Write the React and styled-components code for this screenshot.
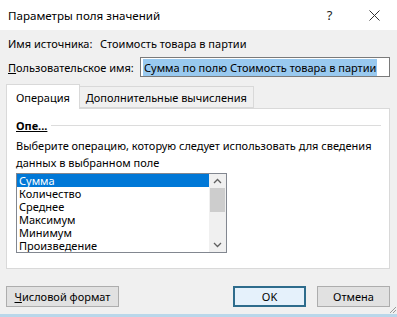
import React from 'react';
import styled, { createGlobalStyle } from 'styled-components';

const Global = createGlobalStyle`
  html, body { margin: 0; padding: 0; background: #f0f0f0; }
  body { font-family: "Noto Sans", "Open Sans", sans-serif; font-size: 11px; color: #000; }
`;

const Window = styled.div`
  width: 397px;
  height: 317px;
  box-sizing: border-box;
  background: #f0f0f0;
  border-bottom: 3px solid #b9d7ea;
  display: flex;
  flex-direction: column;
  overflow: hidden;
  position: relative;
  white-space: nowrap;
`;

const TitleBar = styled.div`
  height: 30px;
  background: #fff;
  display: flex;
  align-items: center;
  padding-left: 8px;
  font-size: 11.6px;
`;

const Title = styled.div`
  flex: 1;
`;

const TitleBtn = styled.div`
  width: 45px;
  height: 30px;
  display: flex;
  align-items: center;
  justify-content: center;
  color: #222;
  font-size: ${p => p.$size || 13}px;
`;

const Body = styled.div`
  flex: 1;
  padding: 0 7px 0 6px;
  display: flex;
  flex-direction: column;
`;

const InfoRow = styled.div`
  height: ${p => p.$h}px;
  display: flex;
  align-items: center;
  padding-left: 2px;
`;

const Label = styled.div`
  width: ${p => p.$w}px;
  flex-shrink: 0;
  u { text-decoration: underline; }
`;

const NameInput = styled.div`
  flex: 1;
  height: 20px;
  box-sizing: border-box;
  border: 1px solid #7a7a7a;
  background: #fff;
  display: flex;
  align-items: center;
  padding-left: 2px;
  overflow: hidden;
`;

const Selected = styled.span`
  background: #99c9ef;
  padding: 1px 1px;
`;

const Tabs = styled.div`
  display: flex;
  align-items: flex-end;
  height: 24px;
  margin-top: 6px;
  position: relative;
  z-index: 1;
`;

const Tab = styled.div`
  height: ${p => (p.$active ? 25 : 22)}px;
  box-sizing: border-box;
  padding: 0 ${p => p.$pad}px;
  display: flex;
  align-items: center;
  border: 1px solid #d9d9d9;
  border-bottom: ${p => (p.$active ? 'none' : '1px solid #d9d9d9')};
  border-left: ${p => (p.$first ? '1px solid #d9d9d9' : 'none')};
  background: ${p => (p.$active ? '#fff' : '#f0f0f0')};
  margin-bottom: ${p => (p.$active ? -1 : 0)}px;
`;

const Panel = styled.div`
  height: 161px;
  box-sizing: border-box;
  background: #fff;
  border: 1px solid #d9d9d9;
  padding: 8px 8px 0 9px;
`;

const GroupHead = styled.div`
  display: flex;
  align-items: center;
  gap: 4px;
  height: 16px;
`;

const GroupTitle = styled.span`
  font-weight: bold;
  text-decoration: underline;
`;

const Rule = styled.div`
  flex: 1;
  height: 1px;
  background: #dcdcdc;
  margin-top: 1px;
`;

const Hint = styled.div`
  margin-top: 4px;
  line-height: 17px;
`;

const ListBox = styled.div`
  margin-top: 2px;
  width: 211px;
  height: 80px;
  box-sizing: border-box;
  border: 1px solid #828790;
  display: flex;
  overflow: hidden;
`;

const Items = styled.div`
  flex: 1;
`;

const Item = styled.div`
  height: 13px;
  line-height: 13px;
  padding-left: 2px;
  background: ${p => (p.$sel ? '#0078d7' : 'transparent')};
  color: ${p => (p.$sel ? '#fff' : '#000')};
`;

const ScrollBar = styled.div`
  width: 17px;
  background: #f0f0f0;
  display: flex;
  flex-direction: column;
  align-items: center;
`;

const Arrow = styled.div`
  height: 14px;
  width: 17px;
  display: flex;
  align-items: center;
  justify-content: center;
`;

const Thumb = styled.div`
  width: 15px;
  height: 24px;
  background: #cdcdcd;
`;

const Spacer = styled.div`
  flex: 1;
`;

const Footer = styled.div`
  display: flex;
  align-items: center;
  margin-top: 17px;
  gap: 11px;
`;

const Button = styled.div`
  height: 21px;
  width: ${p => p.$w}px;
  box-sizing: border-box;
  display: flex;
  align-items: center;
  justify-content: center;
  background: ${p => (p.$def ? '#e5f1fb' : '#e1e1e1')};
  border: ${p => (p.$def ? '2px solid #2e6c8c' : '1px solid #adadad')};
  u { text-decoration: underline; }
`;

const Grip = styled.svg`
  position: absolute;
  right: 0;
  bottom: 0;
`;

const Chevron = ({ up }) => (
  <svg width="9" height="6" viewBox="0 0 9 6">
    <path d={up ? 'M1 5 L4.5 1.5 L8 5' : 'M1 1 L4.5 4.5 L8 1'} fill="none" stroke="#606060" strokeWidth="1.3" />
  </svg>
);

const ops = ['Сумма', 'Количество', 'Среднее', 'Максимум', 'Минимум', 'Произведение'];

export default function App() {
  return (
    <Window>
      <Global />
      <TitleBar>
        <Title>Параметры поля значений</Title>
        <TitleBtn $size={13}>?</TitleBtn>
        <TitleBtn $size={15}>
          <svg width="11" height="11" viewBox="0 0 11 11">
            <path d="M0.5 0.5 L10.5 10.5 M10.5 0.5 L0.5 10.5" stroke="#333" strokeWidth="1" />
          </svg>
        </TitleBtn>
      </TitleBar>
      <Body>
        <InfoRow $h={26}>
          <Label $w={92}>Имя источника:</Label>
          <span>Стоимость товара в партии</span>
        </InfoRow>
        <InfoRow $h={22}>
          <Label $w={132}><u>П</u>ользовательское имя:</Label>
          <NameInput>
            <Selected>Сумма по полю Стоимость товара в партии</Selected>
          </NameInput>
        </InfoRow>
        <Tabs>
          <Tab $active $first $pad={9}>Операция</Tab>
          <Tab $pad={6}>Дополнительные вычисления</Tab>
        </Tabs>
        <Panel>
          <GroupHead>
            <GroupTitle>Опе...</GroupTitle>
            <Rule />
          </GroupHead>
          <Hint>
            Выберите операцию, которую следует использовать для сведения
            <br />
            данных в выбранном поле
          </Hint>
          <ListBox>
            <Items>
              {ops.map((o, i) => (
                <Item key={o} $sel={i === 0}>{o}</Item>
              ))}
            </Items>
            <ScrollBar>
              <Arrow><Chevron up /></Arrow>
              <Thumb />
              <Spacer />
              <Arrow><Chevron /></Arrow>
            </ScrollBar>
          </ListBox>
        </Panel>
        <Footer>
          <Button $w={113}><span><u>Ч</u>исловой формат</span></Button>
          <Spacer />
          <Button $w={73} $def>OK</Button>
          <Button $w={73}>Отмена</Button>
        </Footer>
      </Body>
      <Grip width="10" height="10" viewBox="0 0 10 10">
        <path d="M9 3 L3 9 M9 6 L6 9" stroke="#9a9a9a" strokeWidth="1" />
      </Grip>
    </Window>
  );
}
